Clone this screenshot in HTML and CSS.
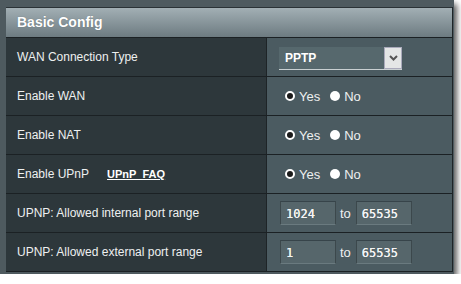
FILE: index.html
```html
<!DOCTYPE html>
<html lang="en">
<head>
  <meta charset="UTF-8">
  <title>Basic Config</title>
  <link rel="stylesheet" href="styles.css">
</head>
<body>
  <div class="frame">
    <div class="config">
      <div class="config-head">Basic Config</div>

      <div class="row">
        <div class="label">WAN Connection Type</div>
        <div class="value">
          <div class="select">
            <span>PPTP</span>
            <span class="select-btn">
              <svg width="9" height="6" viewBox="0 0 9 6"><path d="M1 1 L4.5 4.5 L8 1" fill="none" stroke="#555" stroke-width="2"/></svg>
            </span>
          </div>
        </div>
      </div>

      <div class="row">
        <div class="label">Enable WAN</div>
        <div class="value">
          <span class="radio checked"></span><span class="opt">Yes</span>
          <span class="radio"></span><span class="opt">No</span>
        </div>
      </div>

      <div class="row">
        <div class="label">Enable NAT</div>
        <div class="value">
          <span class="radio checked"></span><span class="opt">Yes</span>
          <span class="radio"></span><span class="opt">No</span>
        </div>
      </div>

      <div class="row">
        <div class="label">Enable UPnP <a class="faq" href="#">UPnP&nbsp;&nbsp;FAQ</a></div>
        <div class="value">
          <span class="radio checked"></span><span class="opt">Yes</span>
          <span class="radio"></span><span class="opt">No</span>
        </div>
      </div>

      <div class="row">
        <div class="label">UPNP: Allowed internal port range</div>
        <div class="value">
          <input class="port" type="text" value="1024">
          <span class="to">to</span>
          <input class="port" type="text" value="65535">
        </div>
      </div>

      <div class="row last">
        <div class="label">UPNP: Allowed external port range</div>
        <div class="value">
          <input class="port" type="text" value="1">
          <span class="to">to</span>
          <input class="port" type="text" value="65535">
        </div>
      </div>
    </div>
  </div>
</body>
</html>
```

FILE: styles.css
```css
body {
  margin: 0;
  background: #fff;
  font-family: "Liberation Sans", Arial, sans-serif;
}

.frame {
  width: 447px;
  padding: 7px 1px 2px 6px;
  background: #4e5a5f;
  box-shadow: 3px 4px 6px rgba(0, 0, 0, 0.65);
}

.config {
  border-right: 1px solid #1e2427;
}

.config-head {
  height: 29px;
  line-height: 29px;
  padding-left: 11px;
  background: linear-gradient(#a2afb4, #6d7b81);
  border-top: 1px solid #2a3236;
  border-bottom: 1px solid #1b2124;
  color: #fff;
  font-weight: bold;
  font-size: 14px;
  text-shadow: 0 0 1px rgba(0, 0, 0, 0.3);
}

.row {
  display: grid;
  grid-template-columns: 261px 1fr;
  height: 38px;
  border-bottom: 1px solid #1b2124;
}

.label {
  display: flex;
  align-items: center;
  padding-left: 11px;
  background: #2d373b;
  border-right: 1px solid #1e2427;
  color: #eef0f0;
  font-size: 12px;
}

.value {
  display: flex;
  align-items: center;
  padding-left: 12px;
  background: #4b5b61;
  color: #eef0f0;
  font-size: 12px;
}

.faq {
  margin-left: 18px;
  color: #fff;
  font-size: 11px;
  font-weight: bold;
}

.select {
  display: flex;
  align-items: center;
  justify-content: space-between;
  width: 123px;
  height: 23px;
  margin-top: 2px;
  background: #56686d;
  border-bottom: 1px solid #c9d0d2;
  color: #fff;
  font-size: 12px;
  font-weight: bold;
  padding-left: 6px;
  box-sizing: border-box;
}

.select-btn {
  display: flex;
  align-items: center;
  justify-content: center;
  width: 18px;
  height: 22px;
  background: #e4e6e6;
  border: 1px solid #aab;
  box-sizing: border-box;
}

.radio {
  width: 10px;
  height: 10px;
  border-radius: 50%;
  background: #fff;
  box-sizing: border-box;
  margin-left: 6px;
}

.radio.checked {
  border: 2px solid #fff;
  background: #1a1a1a;
  margin-left: 6px;
}

.opt {
  margin-left: 4px;
  margin-right: 4px;
  font-size: 13px;
}

.port {
  width: 56px;
  height: 24px;
  box-sizing: border-box;
  margin-left: 1px;
  padding: 2px 0 0 5px;
  background: #56666b;
  border: 1px solid #3c484c;
  border-top-color: #37444a;
  border-bottom-color: #6a7a7f;
  color: #f4f4f4;
  font-family: "DejaVu Sans Mono", monospace;
  font-size: 12px;
  text-shadow: 0 0 0.6px #fff;
}

.to {
  margin: 0 4px 0 4px;
  font-size: 13px;
}
```
